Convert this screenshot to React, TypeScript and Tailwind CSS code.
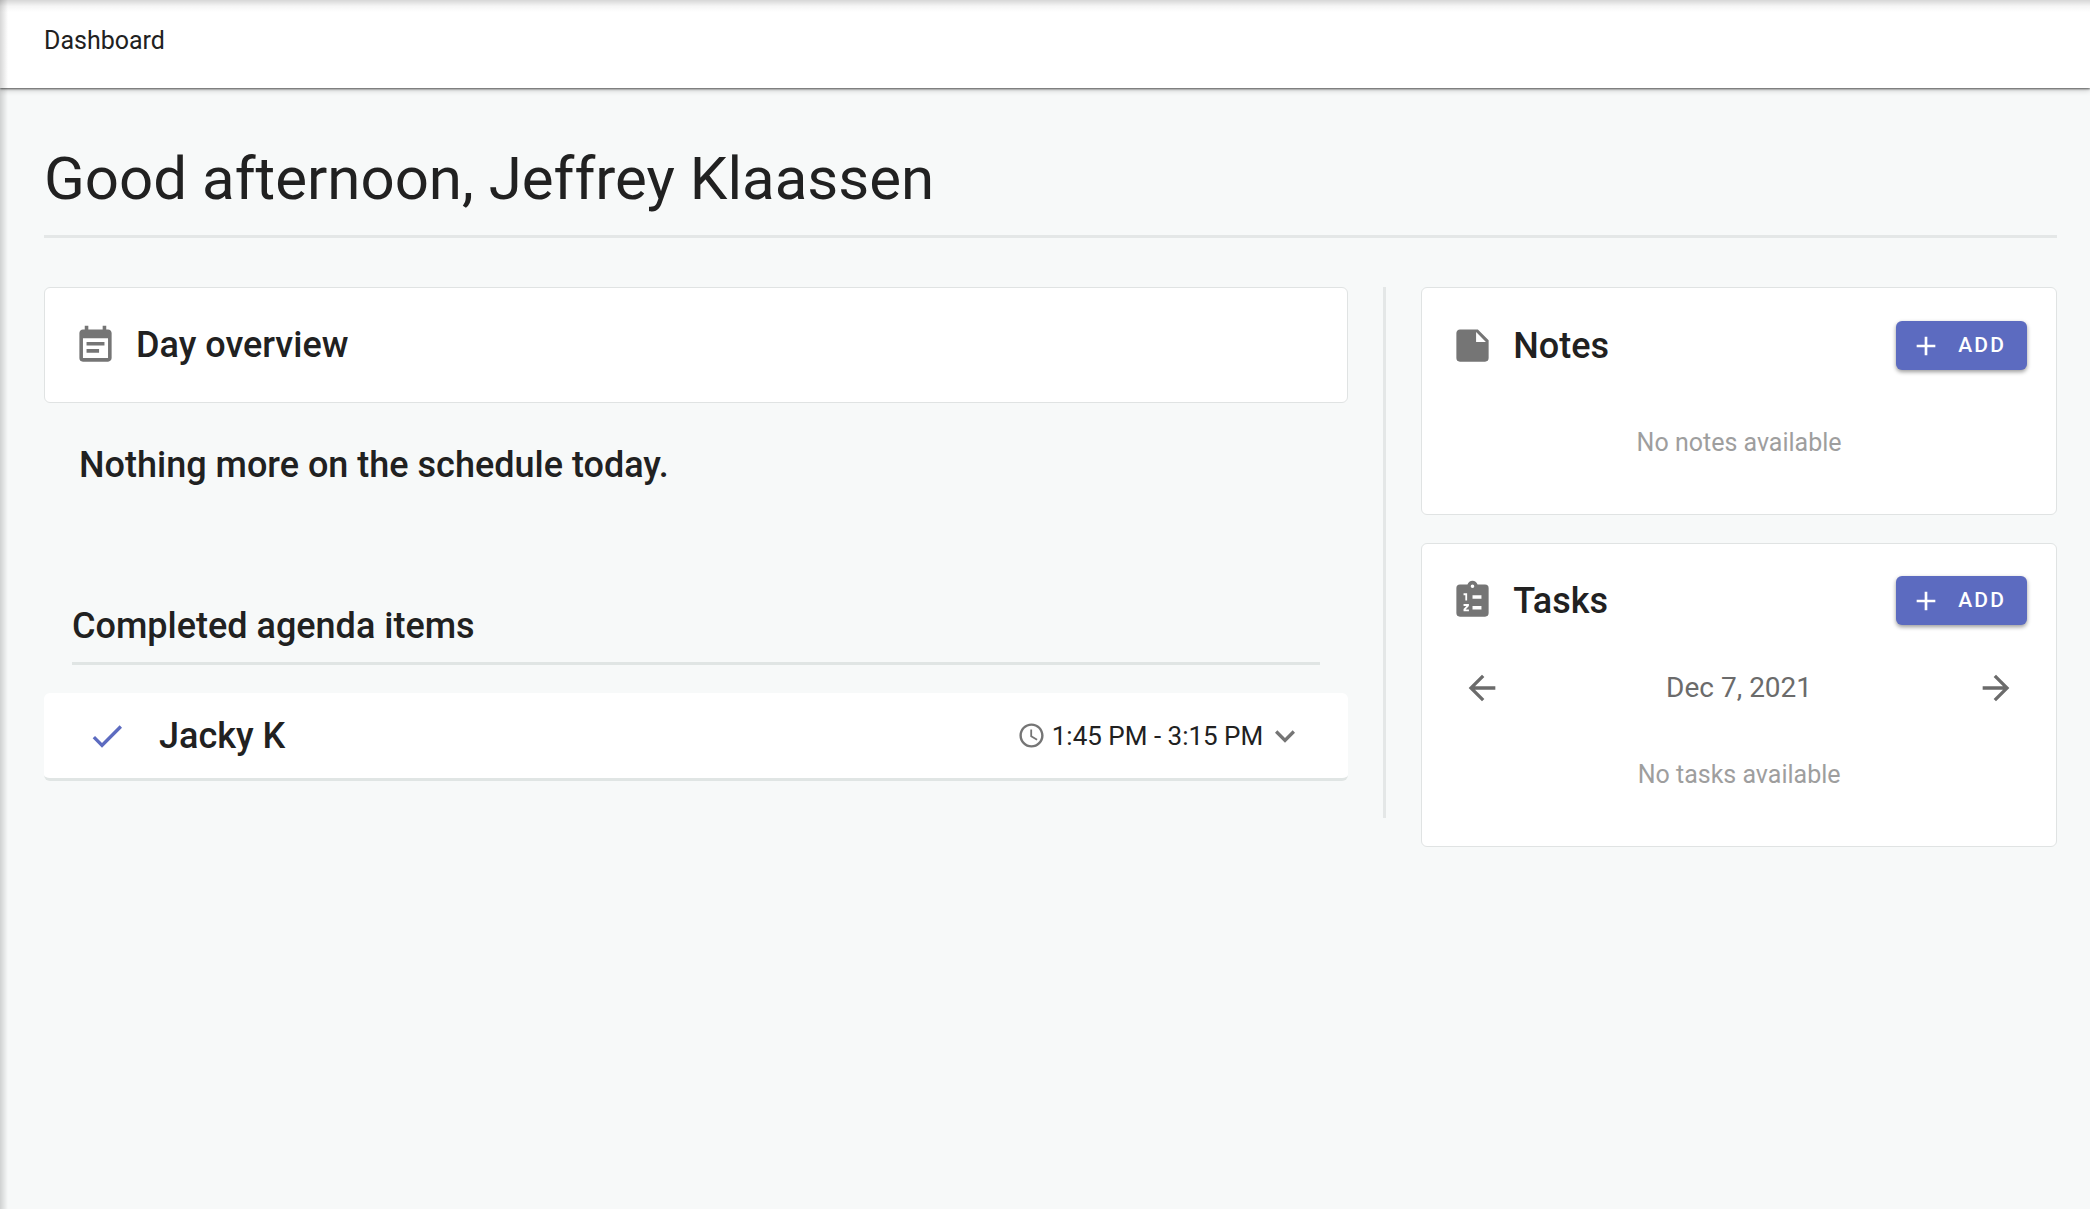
import type { ReactNode } from "react";
import {
  MdAccessTime,
  MdAdd,
  MdArrowBack,
  MdArrowForward,
  MdCheck,
  MdEventNote,
  MdKeyboardArrowDown,
} from "react-icons/md";

function NoteIcon() {
  return (
    <svg viewBox="0 0 24 24" fill="currentColor" className="size-[43px]" aria-hidden="true">
      <path d="M14 10V4.5L19.5 10M5 3C3.89 3 3 3.89 3 5V19A2 2 0 0 0 5 21H19A2 2 0 0 0 21 19V9L15 3H5Z" />
    </svg>
  );
}

function TaskListIcon() {
  return (
    <svg viewBox="0 0 24 24" fill="currentColor" className="size-[43px]" aria-hidden="true">
      <path
        fillRule="evenodd"
        d="M19 3H14.82C14.4 1.84 13.3 1 12 1C10.7 1 9.6 1.84 9.18 3H5A2 2 0 0 0 3 5V19A2 2 0 0 0 5 21H19A2 2 0 0 0 21 19V5A2 2 0 0 0 19 3ZM12 3A1 1 0 0 1 13 4A1 1 0 0 1 12 5A1 1 0 0 1 11 4A1 1 0 0 1 12 3ZM12 9H17V11H12ZM12 15H17V17H12Z"
      />
      <path d="M7 8.5H8.5V12M7 14.5H9.5V14.9L7.5 17V17.5H10" fill="none" stroke="white" />
    </svg>
  );
}

function CardHeader({ icon, title, action }: { icon: ReactNode; title: string; action?: ReactNode }) {
  return (
    <div className="flex items-center gap-[19px] px-[29px]">
      <span className="text-[#757575]">{icon}</span>
      <h2 className="flex-1 text-4xl leading-[48px] font-medium">{title}</h2>
      {action}
    </div>
  );
}

function AddButton({ label }: { label: string }) {
  return (
    <button
      type="button"
      aria-label={label}
      className="flex h-[49px] items-center gap-4 rounded-md bg-[#5c6bc0] pr-[21px] pl-[14px] text-[21px] font-medium tracking-widest text-white shadow-[0_2px_4px_rgba(0,0,0,0.4)]"
    >
      <MdAdd className="size-8" />
      ADD
    </button>
  );
}

export default function App() {
  return (
    <div className="relative min-h-screen bg-[#f7f9f9] font-[Roboto,sans-serif] text-[#212121]">
      <header className="h-[88px] bg-white px-[44px] pt-[25px] shadow-[0_1px_2px_rgba(0,0,0,0.6),0_2px_6px_rgba(0,0,0,0.2)]">
        <p className="text-[25px] leading-[32px]">Dashboard</p>
      </header>

      <main className="pt-[51px] pr-[33px] pb-12 pl-[44px]">
        <h1 className="border-b-3 border-[#e4e7e7] pb-4 text-[60px] leading-[80px]">
          Good afternoon, Jeffrey Klaassen
        </h1>

        <div className="mt-[49px] grid grid-cols-[19fr_9fr] items-start gap-[35px]">
          <div className="border-r-3 border-[#e4e7e7] pr-[35px] pb-[37px]">
            <section className="rounded-md border border-[#e0e3e3] bg-white py-[33px]">
              <CardHeader icon={<MdEventNote className="size-[43px]" />} title="Day overview" />
            </section>
            <p className="mt-[38px] px-[35px] text-4xl leading-[48px] font-medium">
              Nothing more on the schedule today.
            </p>

            <div className="mt-[113px] px-7">
              <h2 className="border-b-3 border-[#e0e5e4] pb-3 text-4xl leading-[48px] font-medium">
                Completed agenda items
              </h2>
            </div>
            <div className="mt-7 flex h-[88px] items-center rounded-md border-b-3 border-[#e0e5e4] bg-white px-[43px]">
              <MdCheck className="size-10 text-[#5c6bc0]" />
              <h3 className="ml-8 flex-1 text-4xl leading-[48px] font-medium">Jacky K</h3>
              <MdAccessTime className="size-[29px] text-[#757575]" />
              <span className="mr-[2px] ml-[6px] text-[26px] leading-[32px]">1:45 PM - 3:15 PM</span>
              <button type="button" aria-label="Show details" className="text-[#757575]">
                <MdKeyboardArrowDown className="size-10" />
              </button>
            </div>
          </div>

          <div className="flex flex-col gap-7">
            <section className="rounded-md border border-[#e0e3e3] bg-white pt-[33px] pb-[55px]">
              <CardHeader icon={<NoteIcon />} title="Notes" action={<AddButton label="Add note" />} />
              <p className="mt-[57px] text-center text-[25px] leading-[32px] text-[#9e9e9e]">
                No notes available
              </p>
            </section>

            <section className="rounded-md border border-[#e0e3e3] bg-white pt-8 pb-[55px]">
              <CardHeader icon={<TaskListIcon />} title="Tasks" action={<AddButton label="Add task" />} />
              <div className="mt-[43px] flex items-center justify-between px-10 text-[#6b6b6b]">
                <button type="button" aria-label="Previous day">
                  <MdArrowBack className="size-10" />
                </button>
                <span className="text-[28px] leading-[40px]">Dec 7, 2021</span>
                <button type="button" aria-label="Next day">
                  <MdArrowForward className="size-10" />
                </button>
              </div>
              <p className="mt-[51px] text-center text-[25px] leading-[32px] text-[#9e9e9e]">
                No tasks available
              </p>
            </section>
          </div>
        </div>
      </main>

      {/* shadows cast by the app bar and the side drawer */}
      <div className="pointer-events-none absolute inset-x-0 top-0 h-3 bg-linear-to-b from-black/16 via-black/4 to-transparent" />
      <div className="pointer-events-none absolute inset-y-0 left-0 w-2 bg-linear-to-r from-black/16 via-black/8 to-transparent" />
    </div>
  );
}
